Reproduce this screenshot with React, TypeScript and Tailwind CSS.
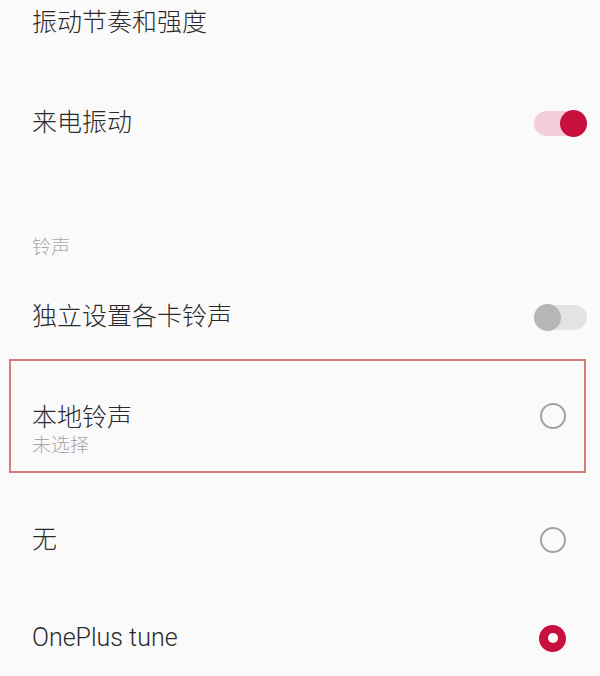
import React from 'react';

const Toggle = ({ on }: { on: boolean }) => (
  <div
    className={`relative flex h-[25px] w-[53px] items-center rounded-full ${
      on ? 'bg-[#f4ced8]' : 'bg-[#e3e3e3]'
    }`}
  >
    <div
      className={`absolute h-[27px] w-[27px] rounded-full ${
        on ? 'right-0 bg-[#c8103e]' : 'left-0 bg-[#b6b6b6]'
      }`}
    />
  </div>
);

const Radio = ({ checked }: { checked: boolean }) =>
  checked ? (
    <div className="flex h-[27px] w-[27px] items-center justify-center rounded-full bg-[#c8103e]">
      <div className="h-[10px] w-[10px] rounded-full bg-white" />
    </div>
  ) : (
    <div className="h-[26px] w-[26px] rounded-full border-2 border-[#a2a2a2]" />
  );

const App = () => {
  return (
    <div
      className="h-[676px] w-[600px] overflow-hidden bg-[#fafafa] font-light text-[#2a2a2a]"
      style={{ fontFamily: 'Roboto, "Noto Sans CJK SC", sans-serif' }}
    >
      <div className="flex h-[46px] items-center pl-[32px] text-[25px]">振动节奏和强度</div>

      <div className="flex h-[154px] items-center justify-between pl-[32px] pr-[13px]">
        <span className="text-[25px]">来电振动</span>
        <Toggle on />
      </div>

      <div className="flex h-[96px] items-center pl-[32px] text-[19px] text-[#a9a9a9]">铃声</div>

      <div className="flex h-[42px] items-center justify-between pl-[32px] pr-[13px]">
        <span className="text-[25px]">独立设置各卡铃声</span>
        <Toggle on={false} />
      </div>

      <div className="ml-[9px] mt-[21px] flex h-[114px] w-[577px] items-center justify-between border-2 border-[#d67b78] pl-[21px] pr-[18px]">
        <div className="flex flex-col pt-[30px]">
          <span className="text-[25px] leading-[30px]">本地铃声</span>
          <span className="text-[19px] leading-[26px] text-[#a6a6a6]">未选择</span>
        </div>
        <Radio checked={false} />
      </div>

      <div className="mt-[37px] flex h-[60px] items-center justify-between pl-[32px] pr-[34px]">
        <span className="text-[25px]">无</span>
        <Radio checked={false} />
      </div>

      <div className="mt-[38px] flex h-[60px] items-center justify-between pl-[32px] pr-[34px]">
        <span className="text-[25px]">OnePlus tune</span>
        <Radio checked />
      </div>
    </div>
  );
};

export default App;
